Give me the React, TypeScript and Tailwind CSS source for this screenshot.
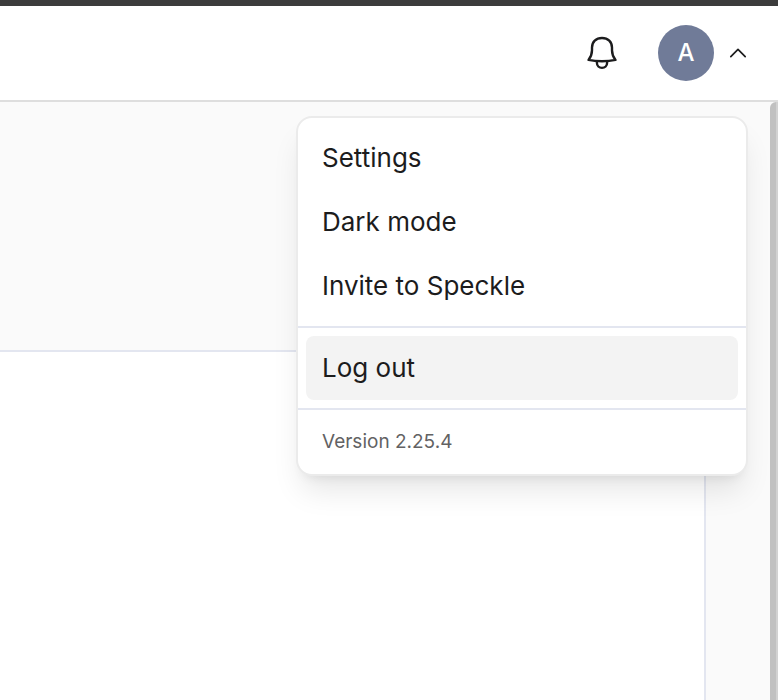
import React, { FunctionComponent, ReactNode } from "react";

const BellIcon: FunctionComponent = () => (
  <svg
    className="h-9 w-9"
    viewBox="0 0 36 36"
    fill="none"
    stroke="currentColor"
    strokeWidth="2.4"
    strokeLinejoin="round"
    strokeLinecap="round"
    aria-hidden="true"
  >
    <path d="M18 3C12 3 8 7 8 12.6V15.2C8 19 6.8 22 4.5 24.9C8.8 25.9 13.4 26.3 18 26.3C22.6 26.3 27.2 25.9 31.5 24.9C29.2 22 28 19 28 15.2V12.6C28 7 24 3 18 3Z" />
    <path d="M12.9 26.4V27.8C12.9 30.8 15.1 32.9 18 32.9C20.9 32.9 23.1 30.8 23.1 27.8V26.4" />
  </svg>
);

const ChevronUpIcon: FunctionComponent = () => (
  <svg
    className="h-5 w-5"
    viewBox="0 0 20 20"
    fill="none"
    stroke="currentColor"
    strokeWidth="1.7"
    strokeLinejoin="round"
    strokeLinecap="round"
    aria-hidden="true"
  >
    <path d="M2.8 13.6L10 6.4L17.2 13.6" />
  </svg>
);

const MenuItem: FunctionComponent<{ active?: boolean; children: ReactNode }> = ({ active, children }) => (
  <button
    type="button"
    role="menuitem"
    className={`flex h-16 w-full items-center rounded-lg px-4 text-left text-[26px] leading-8 ${
      active ? "bg-[#f3f3f3]" : "hover:bg-[#f3f3f3]"
    }`}
  >
    {children}
  </button>
);

const UserMenu: FunctionComponent = () => (
  <div
    role="menu"
    className="absolute top-[110px] right-[30px] w-[452px] rounded-2xl border-2 border-[#ebebeb] bg-white shadow-[0_20px_30px_-6px_rgba(0,0,0,0.1),0_8px_12px_-8px_rgba(0,0,0,0.1)]"
  >
    <div className="p-2">
      <MenuItem>Settings</MenuItem>
      <MenuItem>Dark mode</MenuItem>
      <MenuItem>Invite to Speckle</MenuItem>
    </div>
    <div className="border-y-2 border-[#e3e6f0] p-2">
      <MenuItem active>Log out</MenuItem>
    </div>
    <p className="flex h-16 items-center px-6 text-[19px] leading-7 text-[#626263]">Version 2.25.4</p>
  </div>
);

export default function App() {
  return (
    <div className="flex h-screen flex-col overflow-hidden bg-[#fafafa] font-['Inter',sans-serif] text-[#1c1c1d]">
      <div className="h-1.5 shrink-0 bg-[#3c3c3c]" />
      <div className="relative flex min-h-0 flex-1 flex-col">
        <header className="flex h-24 shrink-0 items-center justify-end border-b-2 border-[#dedede] bg-white pr-[30px]">
          <button type="button" aria-label="Notifications" className="mr-[38px]">
            <BellIcon />
          </button>
          <button type="button" aria-label="User menu" aria-expanded="true" className="flex items-center gap-3.5">
            <span className="flex h-14 w-14 items-center justify-center rounded-full bg-[#707b98] text-2xl font-medium text-white">
              A
            </span>
            <ChevronUpIcon />
          </button>
        </header>
        <div className="flex min-h-0 flex-1">
          <main className="flex flex-1 flex-col pt-62 pr-16">
            <section className="flex-1 border-t-2 border-r-2 border-[#e3e6f0] bg-white" />
          </main>
          <div className="w-2 rounded-tl-md border-r-2 border-[#d2d2d2] bg-[#c1c1c1]" />
        </div>
        <UserMenu />
      </div>
    </div>
  );
}
